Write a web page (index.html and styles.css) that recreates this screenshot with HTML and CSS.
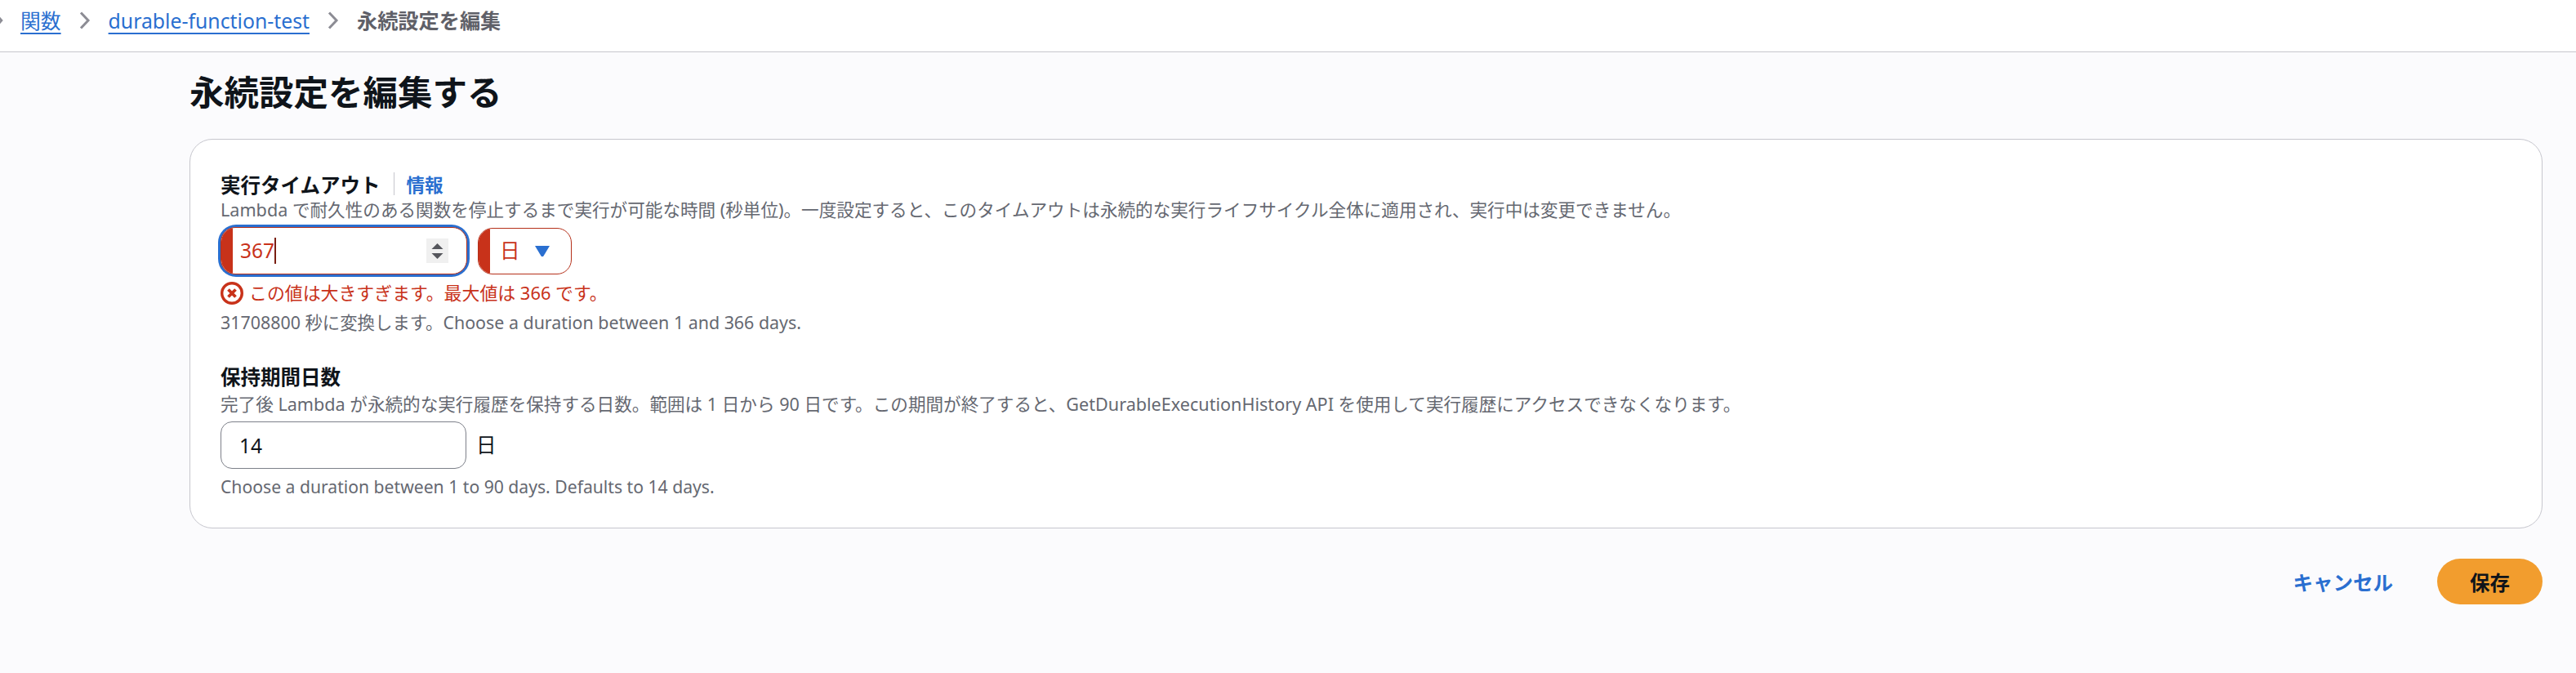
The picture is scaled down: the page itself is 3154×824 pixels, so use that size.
FILE: index.html
```html
<!DOCTYPE html>
<html lang="ja">
<head>
<meta charset="utf-8">
<title>永続設定を編集する</title>
<link rel="stylesheet" href="styles.css">
</head>
<body>
<nav class="crumbs">
  <svg class="chev chev-cut" viewBox="0 0 8 22"><path d="M-4 4l6 7-6 7" fill="none" stroke="#8c8c94" stroke-width="2.6"/></svg>
  <a class="crumb-link">関数</a>
  <svg class="chev" viewBox="0 0 16 22"><path d="M3 1.500l9 9.500-9 9.500" fill="none" stroke="#8c8c94" stroke-width="3"/></svg>
  <a class="crumb-link">durable-function-test</a>
  <svg class="chev" viewBox="0 0 16 22"><path d="M3 1.500l9 9.500-9 9.500" fill="none" stroke="#8c8c94" stroke-width="3"/></svg>
  <span class="crumb-current">永続設定を編集</span>
</nav>
<main class="main">
  <h1 class="title">永続設定を編集する</h1>
  <section class="card">
    <div class="label-row">
      <span class="label">実行タイムアウト</span>
      <span class="divider"></span>
      <a class="info">情報</a>
    </div>
    <p class="desc">Lambda で耐久性のある関数を停止するまで実行が可能な時間 (秒単位)。一度設定すると、このタイムアウトは永続的な実行ライフサイクル全体に適用され、実行中は変更できません。</p>
    <div class="control-row">
      <div class="focus-ring">
        <div class="num-input">
          <span class="num-value">367</span><span class="caret"></span>
          <span class="spinner">
            <svg viewBox="0 0 27 30" class="spin-icon"><path d="M13.5 6l7 7h-14z" fill="#55565c"/><path d="M13.5 25l7-7h-14z" fill="#55565c"/></svg>
          </span>
        </div>
      </div>
      <div class="unit-select">
        <span class="unit-value">日</span>
        <svg viewBox="0 0 20 15" class="unit-arrow"><path d="M1 1h18l-7.5 12.5q-1.500 1.500-3 0z" fill="#2a6fd0"/></svg>
      </div>
    </div>
    <div class="error-row">
      <svg viewBox="0 0 28 28" class="error-icon"><circle cx="14" cy="14" r="12.300" fill="none" stroke="#c8321a" stroke-width="3.400"/><path d="M9.500 9.500l9 9M18.500 9.500l-9 9" stroke="#c8321a" stroke-width="3.800"/></svg>
      <span class="error-text">この値は大きすぎます。最大値は 366 です。</span>
    </div>
    <p class="hint hint-first">31708800 秒に変換します。Choose a duration between 1 and 366 days.</p>

    <div class="label-row label-row-second">
      <span class="label">保持期間日数</span>
    </div>
    <p class="desc desc-second">完了後 Lambda が永続的な実行履歴を保持する日数。範囲は 1 日から 90 日です。この期間が終了すると、GetDurableExecutionHistory API を使用して実行履歴にアクセスできなくなります。</p>
    <div class="control-row control-row-second">
      <div class="plain-input">14</div>
      <span class="suffix">日</span>
    </div>
    <p class="hint hint-last">Choose a duration between 1 to 90 days. Defaults to 14 days.</p>
  </section>
  <div class="actions">
    <a class="cancel">キャンセル</a>
    <span class="save">保存</span>
  </div>
</main>
</body>
</html>
```
FILE: styles.css
```css
* { box-sizing: border-box; }
html, body { margin: 0; padding: 0; }
body {
  height: 824px;
  overflow: hidden;
  background: #fbfbfd;
  color: #0f141a;
  font-family: "Noto Sans", "Noto Sans CJK JP", sans-serif;
  font-size: 24.5px;
}
.crumbs {
  height: 64px;
  padding-bottom: 14px;
  background: #fff;
  border-bottom: 1px solid #c6c6cd;
  display: flex;
  align-items: center;
  gap: 0;
  line-height: 32px;
}
.chev { width: 16px; height: 22px; margin: 0 21px; flex: none; }
.chev-cut { width: 8px; margin: 0 17px 0 0; }
.crumb-link {
  color: #2a6fd0;
  font-size: 24.8px;
  text-decoration: underline;
  text-underline-offset: 5px;
  text-decoration-thickness: 2px;
}
.crumb-current { color: #5f6068; font-size: 25.2px; font-weight: 700; }
.main { padding: 24px 41px 0 232px; }
.title {
  margin: 0 0 32px;
  font-size: 42.5px;
  line-height: 50px;
  font-weight: 700;
}
.card {
  height: 477px;
  padding: 38px 37px 0;
  background: #fff;
  border: 1px solid #c6c6cd;
  border-radius: 28px;
}
.label-row { display: flex; align-items: center; height: 32px; }
.label-row-second { margin-top: 35px; }
.label { font-weight: 600; }
.divider { width: 1px; height: 28px; margin: 0 15px 0 16px; background: #c6c6cd; }
.info { color: #2a6fd0; font-size: 22.6px; font-weight: 700; }
.desc { margin: 2px 0 0; font-size: 21.6px; line-height: 28px; color: #656871; }
.hint { margin: 8px 0 0; font-size: 21.3px; line-height: 28px; color: #656871; }
.hint-first { font-size: 21.4px; }
.hint-last { font-size: 21.15px; }
.desc-second { margin-top: 5px; }
.control-row { display: flex; align-items: center; margin-top: 4px; margin-left: -3px; gap: 10px; }
.control-row-second { margin-top: 7px; margin-left: 0; gap: 12px; }
.focus-ring {
  width: 308px;
  height: 64px;
  padding: 3px;
  border-radius: 22px;
  background: #2a6fd0;
}
.num-input {
  position: relative;
  height: 100%;
  display: flex;
  align-items: center;
  padding-left: 23px;
  background: #fff;
  border: 1px solid #b5301a;
  border-radius: 18px;
  overflow: hidden;
  color: #c8321a;
}
.num-input::before, .unit-select::before {
  content: "";
  position: absolute;
  left: 0;
  top: 0;
  bottom: 0;
  width: 14px;
  background: #c8321a;
}
.num-value { line-height: 32px; }
.caret { width: 1.500px; height: 32px; background: #7a1f12; }
.spinner {
  margin-left: auto;
  margin-right: 22px;
  width: 27px;
  height: 30px;
  background: #f0f0f0;
  display: flex;
}
.spin-icon { width: 27px; height: 30px; }
.unit-select {
  position: relative;
  width: 115px;
  height: 57px;
  display: flex;
  align-items: center;
  padding-left: 26px;
  background: #fff;
  border: 1px solid #b5301a;
  border-radius: 18px;
  overflow: hidden;
  color: #c8321a;
}
.unit-value { line-height: 32px; }
.unit-arrow { width: 20px; height: 15px; margin-left: 17px; }
.error-row { display: flex; align-items: center; gap: 7px; height: 28px; margin-top: 6px; }
.error-icon { width: 28px; height: 28px; flex: none; }
.error-text { color: #c8321a; font-size: 21.9px; line-height: 28px; }
.plain-input {
  width: 301px;
  height: 58px;
  padding-left: 22px;
  display: flex;
  align-items: center;
  background: #fff;
  border: 1px solid #7d8089;
  border-radius: 14px;
}
.suffix { line-height: 32px; }
.actions {
  margin-top: 37px;
  display: flex;
  justify-content: flex-end;
  align-items: center;
  gap: 54px;
}
.cancel { color: #2a6fd0; font-weight: 700; }
.save {
  width: 129px;
  height: 56px;
  display: flex;
  align-items: center;
  justify-content: center;
  border-radius: 28px;
  background: #f29d2e;
  color: #0f141a;
  font-weight: 700;
}
```
